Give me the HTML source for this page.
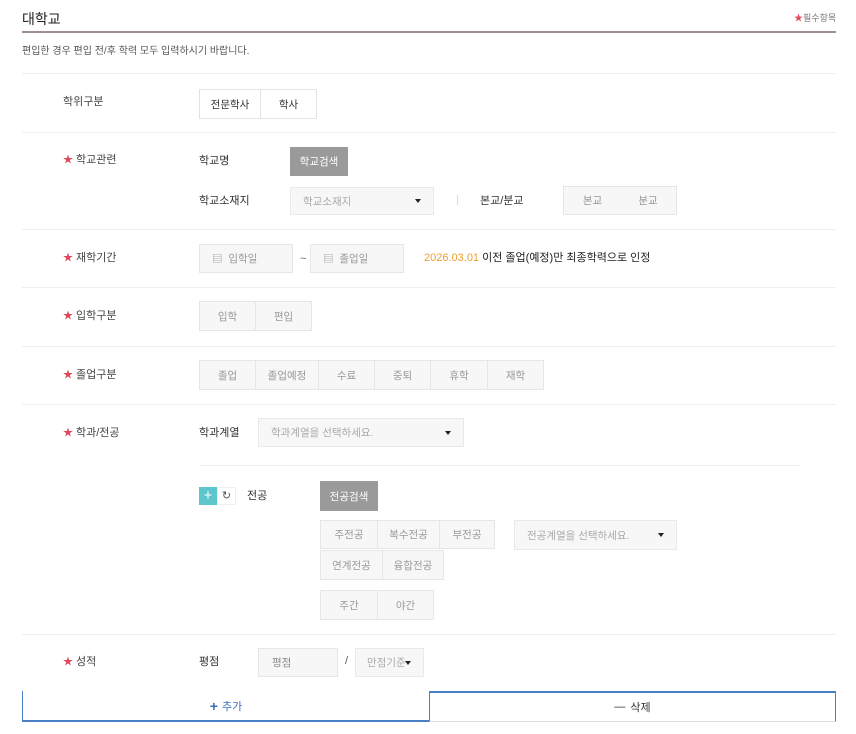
<!DOCTYPE html>
<html><head><meta charset="utf-8"><style>
*{box-sizing:border-box;margin:0;padding:0}
body{width:856px;height:734px;background:#fff;font-family:"Liberation Sans","Noto Sans CJK KR",sans-serif;position:relative;overflow:hidden;color:#333}
.a{position:absolute}
.t{font-size:11px;white-space:nowrap;line-height:1}
.hr{position:absolute;left:22px;width:814px;height:1px;background:#eeeeee}
.lb{position:absolute;left:63px;font-size:11px;color:#444;line-height:1}
.st{color:#e0485a;font-size:10px;margin-right:3px}
.b{position:absolute;display:flex;align-items:center;justify-content:center;font-size:10.5px;color:#999;background:#f7f7f7;border:1px solid #e6e6e6}
.w{background:#fff;color:#333;border-color:#e3e3e3}
.g{background:#9a9a9a;color:#fff;border:none}
.sel{position:absolute;background:#f7f7f7;border:1px solid #e9e9e9;font-size:10.5px;color:#aaa;display:flex;align-items:center;padding-left:12px}
.sel:after{content:"";position:absolute;right:12px;top:50%;margin-top:-2px;border-left:3px solid transparent;border-right:3px solid transparent;border-top:4px solid #222}
.k{position:absolute;font-size:11px;color:#333;line-height:1}
</style></head><body>
<div class="a" style="left:22px;top:9px;font-size:14px;color:#222">대학교</div>
<div class="a t" style="left:794px;top:14px;font-size:9px;color:#777"><span style="color:#e0485a">★</span>필수항목</div>
<div class="a" style="left:22px;top:31px;width:814px;height:2px;background:#a08f8f"></div>
<div class="a t" style="left:22px;top:47px;font-size:10px;color:#555">편입한 경우 편입 전/후 학력 모두 입력하시기 바랍니다.</div>
<div class="hr" style="top:73px"></div>
<div class="hr" style="top:132px"></div>
<div class="hr" style="top:229px"></div>
<div class="hr" style="top:287px"></div>
<div class="hr" style="top:346px"></div>
<div class="hr" style="top:404px"></div>
<div class="a" style="left:200px;top:465px;width:600px;height:1px;background:#eee"></div>
<div class="hr" style="top:634px"></div>

<div class="lb" style="top:97px">학위구분</div>
<div class="b w" style="left:199px;top:89px;width:62px;height:30px">전문학사</div>
<div class="b w" style="left:260px;top:89px;width:57px;height:30px">학사</div>

<div class="lb" style="top:155px"><span class="st">★</span>학교관련</div>
<div class="k" style="left:199px;top:156px">학교명</div>
<div class="b g" style="left:290px;top:147px;width:58px;height:29px">학교검색</div>
<div class="k" style="left:199px;top:196px">학교소재지</div>
<div class="sel" style="left:290px;top:187px;width:144px;height:28px">학교소재지</div>
<div class="a" style="left:457px;top:195px;width:1px;height:10px;background:#ddd"></div>
<div class="k" style="left:480px;top:196px">본교/분교</div>
<div class="b" style="left:563px;top:186px;width:58px;height:29px;border-right:none">본교</div>
<div class="b" style="left:620px;top:186px;width:57px;height:29px;border-left:none">분교</div>

<div class="lb" style="top:253px"><span class="st">★</span>재학기간</div>
<div class="b" style="left:199px;top:244px;width:94px;height:29px;justify-content:flex-start;padding-left:12px">▤&nbsp;&nbsp;입학일</div>
<div class="a t" style="left:300px;top:254px;color:#666">~</div>
<div class="b" style="left:310px;top:244px;width:94px;height:29px;justify-content:flex-start;padding-left:12px">▤&nbsp;&nbsp;졸업일</div>
<div class="a t" style="left:424px;top:253px;font-size:11px;color:#222"><span style="color:#e8a030">2026.03.01</span> 이전 졸업(예정)만 최종학력으로 인정</div>

<div class="lb" style="top:311px"><span class="st">★</span>입학구분</div>
<div class="b" style="left:199px;top:301px;width:57px;height:30px">입학</div>
<div class="b" style="left:255px;top:301px;width:57px;height:30px">편입</div>

<div class="lb" style="top:370px"><span class="st">★</span>졸업구분</div>
<div class="b" style="left:199px;top:360px;width:57px;height:30px">졸업</div>
<div class="b" style="left:255px;top:360px;width:64px;height:30px">졸업예정</div>
<div class="b" style="left:318px;top:360px;width:57px;height:30px">수료</div>
<div class="b" style="left:374px;top:360px;width:57px;height:30px">중퇴</div>
<div class="b" style="left:430px;top:360px;width:58px;height:30px">휴학</div>
<div class="b" style="left:487px;top:360px;width:57px;height:30px">재학</div>

<div class="lb" style="top:428px"><span class="st">★</span>학과/전공</div>
<div class="k" style="left:199px;top:428px">학과계열</div>
<div class="sel" style="left:258px;top:418px;width:206px;height:29px">학과계열을 선택하세요.</div>

<div class="a" style="left:199px;top:487px;width:18px;height:18px;background:#5cc6cc;color:#fff;font-size:15px;line-height:17px;text-align:center">+</div>
<div class="a" style="left:217px;top:487px;width:19px;height:18px;border:1px solid #eee;font-size:11px;line-height:16px;text-align:center;color:#555">↻</div>
<div class="k" style="left:247px;top:491px">전공</div>
<div class="b g" style="left:320px;top:481px;width:58px;height:30px">전공검색</div>
<div class="b" style="left:320px;top:520px;width:58px;height:29px">주전공</div>
<div class="b" style="left:377px;top:520px;width:63px;height:29px">복수전공</div>
<div class="b" style="left:439px;top:520px;width:56px;height:29px">부전공</div>
<div class="sel" style="left:514px;top:520px;width:163px;height:30px">전공계열을 선택하세요.</div>
<div class="b" style="left:320px;top:550px;width:63px;height:30px">연계전공</div>
<div class="b" style="left:382px;top:550px;width:62px;height:30px">융합전공</div>
<div class="b" style="left:320px;top:590px;width:58px;height:30px">주간</div>
<div class="b" style="left:377px;top:590px;width:57px;height:30px">야간</div>

<div class="lb" style="top:657px"><span class="st">★</span>성적</div>
<div class="k" style="left:199px;top:657px">평점</div>
<div class="b" style="left:258px;top:648px;width:80px;height:29px;justify-content:flex-start;padding-left:13px;color:#888">평점</div>
<div class="a t" style="left:345px;top:656px;color:#555">/</div>
<div class="sel" style="left:355px;top:648px;width:69px;height:29px;padding-left:11px">만점기준</div>
<div class="sel" style="display:none"></div>

<div class="a" style="left:22px;top:691px;width:407px;height:31px;border-left:1px solid #4a7fc8;border-bottom:2px solid #4a7fc8;display:flex;align-items:center;justify-content:center;font-size:11px;color:#3a6fc0"><b style="font-size:14px;margin-right:4px">+</b>추가</div>
<div class="a" style="left:429px;top:691px;width:407px;height:31px;border:1px solid #4a7fc8;border-top:2px solid #4a7fc8;border-bottom:1px solid #ddd;display:flex;align-items:center;justify-content:center;font-size:11px;color:#333"><span style="margin-right:5px">—</span>삭제</div>
</body></html>
